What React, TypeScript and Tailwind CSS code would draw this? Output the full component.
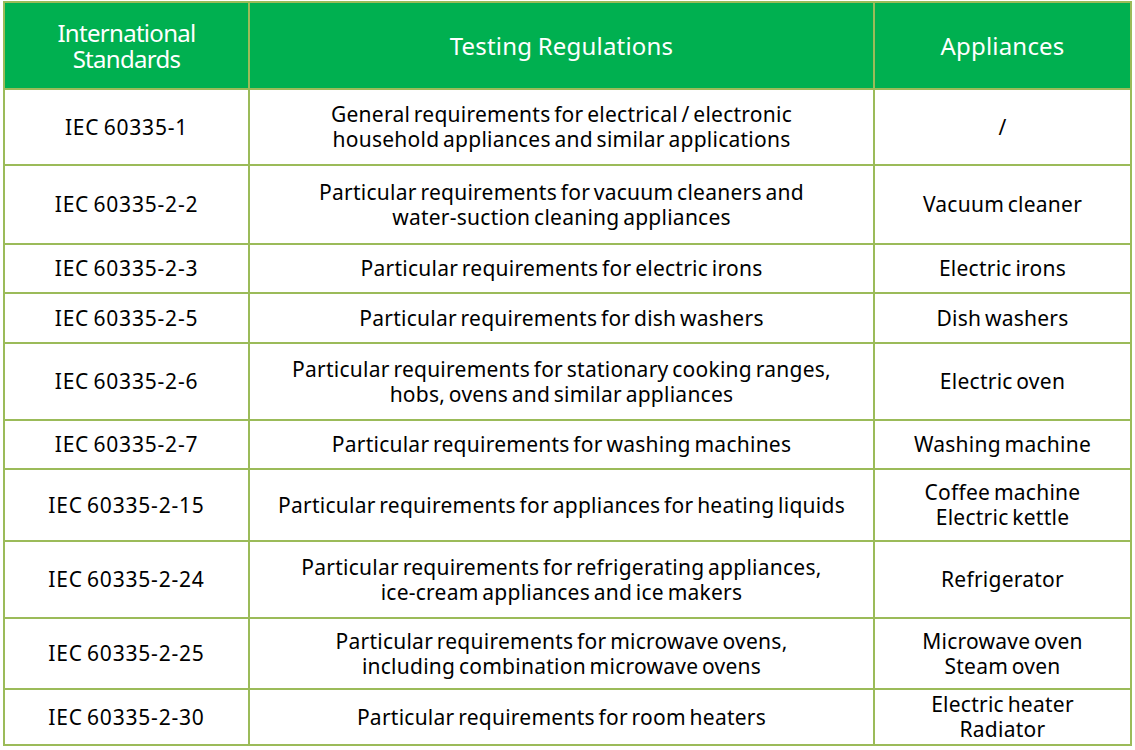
const rows: { std: string; reg: string[]; app: string[]; h: string }[] = [
  {
    std: "IEC 60335-1",
    reg: ["General requirements for electrical / electronic", "household appliances and similar applications"],
    app: ["/"],
    h: "h-[76px]",
  },
  {
    std: "IEC 60335-2-2",
    reg: ["Particular requirements for vacuum cleaners and", "water-suction cleaning appliances"],
    app: ["Vacuum cleaner"],
    h: "h-[79px]",
  },
  {
    std: "IEC 60335-2-3",
    reg: ["Particular requirements for electric irons"],
    app: ["Electric irons"],
    h: "h-[49px]",
  },
  {
    std: "IEC 60335-2-5",
    reg: ["Particular requirements for dish washers"],
    app: ["Dish washers"],
    h: "h-[50px]",
  },
  {
    std: "IEC 60335-2-6",
    reg: ["Particular requirements for stationary cooking ranges,", "hobs, ovens and similar appliances"],
    app: ["Electric oven"],
    h: "h-[77px]",
  },
  {
    std: "IEC 60335-2-7",
    reg: ["Particular requirements for washing machines"],
    app: ["Washing machine"],
    h: "h-[49px]",
  },
  {
    std: "IEC 60335-2-15",
    reg: ["Particular requirements for appliances for heating liquids"],
    app: ["Coffee machine", "Electric kettle"],
    h: "h-[72px]",
  },
  {
    std: "IEC 60335-2-24",
    reg: ["Particular requirements for refrigerating appliances,", "ice-cream appliances and ice makers"],
    app: ["Refrigerator"],
    h: "h-[77px]",
  },
  {
    std: "IEC 60335-2-25",
    reg: ["Particular requirements for microwave ovens,", "including combination microwave ovens"],
    app: ["Microwave oven", "Steam oven"],
    h: "h-[71px]",
  },
  {
    std: "IEC 60335-2-30",
    reg: ["Particular requirements for room heaters"],
    app: ["Electric heater", "Radiator"],
    h: "h-[56px]",
  },
];

function Lines({ lines }: { lines: string[] }) {
  return (
    <>
      {lines.map((l) => (
        <div key={l} className="whitespace-nowrap">
          {l}
        </div>
      ))}
    </>
  );
}

export default function App() {
  return (
    <div className="min-h-screen bg-white pl-[3px] pt-[1px] font-['Noto_Sans',sans-serif]">
      <table className="table-fixed border-collapse border-2 border-[#9bbb59] text-center">
        <colgroup>
          <col className="w-[245px]" />
          <col className="w-[625px]" />
          <col className="w-[257px]" />
        </colgroup>
        <thead>
          <tr className="h-[87px] bg-[#00b050] text-[24px] leading-[26px] tracking-[0.2px] text-white [word-spacing:-1px]">
            <th className="border-2 border-[#9bbb59] font-normal tracking-[-0.7px]">
              <div>International</div>
              <div>Standards</div>
            </th>
            <th className="border-2 border-[#9bbb59] font-normal">Testing Regulations</th>
            <th className="border-2 border-[#9bbb59] font-normal">Appliances</th>
          </tr>
        </thead>
        <tbody className="text-[21px] leading-[25px] tracking-[0.25px] text-black [word-spacing:-2px]">
          {rows.map((r) => (
            <tr key={r.std} className={r.h}>
              <td className="border-2 border-[#9bbb59] tracking-[0.8px]">{r.std}</td>
              <td className="border-2 border-[#9bbb59]">
                <Lines lines={r.reg} />
              </td>
              <td className="border-2 border-[#9bbb59]">
                <Lines lines={r.app} />
              </td>
            </tr>
          ))}
        </tbody>
      </table>
    </div>
  );
}
